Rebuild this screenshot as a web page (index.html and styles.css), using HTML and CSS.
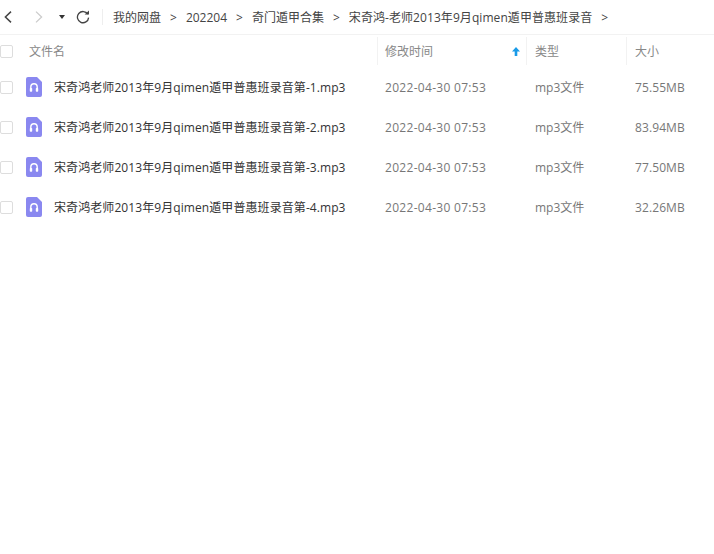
FILE: index.html
```html
<!DOCTYPE html>
<html lang="zh-CN">
<head>
  <meta charset="UTF-8">
  <meta name="viewport" content="width=device-width, initial-scale=1.0">
  <title>我的网盘</title>
  <link rel="stylesheet" href="styles.css">
</head>
<body>
  <div class="toolbar">
    <div class="nav">
      <svg class="nav-back" width="8" height="12" viewBox="0 0 8 12"><path d="M7 0.6 L1.4 6 L7 11.4" fill="none" stroke="#444" stroke-width="1.5"/></svg>
      <svg class="nav-next" width="8" height="12" viewBox="0 0 8 12"><path d="M1 0.6 L6.6 6 L1 11.4" fill="none" stroke="#ccc" stroke-width="1.3"/></svg>
      <svg class="nav-drop" width="6" height="4" viewBox="0 0 6 4"><path d="M0 0 H6 L3 4 Z" fill="#333"/></svg>
      <svg class="nav-refresh" width="14" height="14" viewBox="0 0 14 14"><path d="M11.8 4.2 A5.6 5.6 0 1 0 12.6 7.6" fill="none" stroke="#444" stroke-width="1.3"/><path d="M8.6 4.6 H13 V0.6 Z" fill="#444"/></svg>
    </div>
    <div class="crumbs">
      <span>我的网盘</span><i>&gt;</i>
      <span>202204</span><i>&gt;</i>
      <span>奇门遁甲合集</span><i>&gt;</i>
      <span class="crumb-last">宋奇鸿-老师2013年9月qimen遁甲普惠班录音</span><i>&gt;</i>
    </div>
  </div>

  <div class="row head">
    <div class="cell-check"><span class="check"></span></div>
    <div class="col-name">文件名</div>
    <div class="col-time">修改时间
      <svg class="sort" width="8" height="9" viewBox="0 0 8 9"><path d="M4 0 L8 4.5 H5.3 V9 H2.7 V4.5 H0 Z" fill="#1a9be8"/></svg>
    </div>
    <div class="col-type">类型</div>
    <div class="col-size">大小</div>
  </div>

  <div class="row file">
    <div class="cell-check"><span class="check"></span></div>
    <div class="col-name">
      <svg class="file-icon" width="16" height="20" viewBox="0 0 16 20"><path d="M2 0 H11 L16 5 V18 A2 2 0 0 1 14 20 H2 A2 2 0 0 1 0 18 V2 A2 2 0 0 1 2 0 Z" fill="#8a88f0"/><path d="M4.8 13 V10 A3.2 3.2 0 0 1 11.2 10 V13" fill="none" stroke="#fff" stroke-width="1.4"/><rect x="3.8" y="11" width="2.4" height="3.8" rx=".7" fill="#fff"/><rect x="9.8" y="11" width="2.4" height="3.8" rx=".7" fill="#fff"/></svg>
      <span class="file-name">宋奇鸿老师2013年9月qimen遁甲普惠班录音第-1.mp3</span>
    </div>
    <div class="col-time">2022-04-30 07:53</div>
    <div class="col-type">mp3文件</div>
    <div class="col-size">75.55MB</div>
  </div>
  <div class="row file">
    <div class="cell-check"><span class="check"></span></div>
    <div class="col-name">
      <svg class="file-icon" width="16" height="20" viewBox="0 0 16 20"><path d="M2 0 H11 L16 5 V18 A2 2 0 0 1 14 20 H2 A2 2 0 0 1 0 18 V2 A2 2 0 0 1 2 0 Z" fill="#8a88f0"/><path d="M4.8 13 V10 A3.2 3.2 0 0 1 11.2 10 V13" fill="none" stroke="#fff" stroke-width="1.4"/><rect x="3.8" y="11" width="2.4" height="3.8" rx=".7" fill="#fff"/><rect x="9.8" y="11" width="2.4" height="3.8" rx=".7" fill="#fff"/></svg>
      <span class="file-name">宋奇鸿老师2013年9月qimen遁甲普惠班录音第-2.mp3</span>
    </div>
    <div class="col-time">2022-04-30 07:53</div>
    <div class="col-type">mp3文件</div>
    <div class="col-size">83.94MB</div>
  </div>
  <div class="row file">
    <div class="cell-check"><span class="check"></span></div>
    <div class="col-name">
      <svg class="file-icon" width="16" height="20" viewBox="0 0 16 20"><path d="M2 0 H11 L16 5 V18 A2 2 0 0 1 14 20 H2 A2 2 0 0 1 0 18 V2 A2 2 0 0 1 2 0 Z" fill="#8a88f0"/><path d="M4.8 13 V10 A3.2 3.2 0 0 1 11.2 10 V13" fill="none" stroke="#fff" stroke-width="1.4"/><rect x="3.8" y="11" width="2.4" height="3.8" rx=".7" fill="#fff"/><rect x="9.8" y="11" width="2.4" height="3.8" rx=".7" fill="#fff"/></svg>
      <span class="file-name">宋奇鸿老师2013年9月qimen遁甲普惠班录音第-3.mp3</span>
    </div>
    <div class="col-time">2022-04-30 07:53</div>
    <div class="col-type">mp3文件</div>
    <div class="col-size">77.50MB</div>
  </div>
  <div class="row file">
    <div class="cell-check"><span class="check"></span></div>
    <div class="col-name">
      <svg class="file-icon" width="16" height="20" viewBox="0 0 16 20"><path d="M2 0 H11 L16 5 V18 A2 2 0 0 1 14 20 H2 A2 2 0 0 1 0 18 V2 A2 2 0 0 1 2 0 Z" fill="#8a88f0"/><path d="M4.8 13 V10 A3.2 3.2 0 0 1 11.2 10 V13" fill="none" stroke="#fff" stroke-width="1.4"/><rect x="3.8" y="11" width="2.4" height="3.8" rx=".7" fill="#fff"/><rect x="9.8" y="11" width="2.4" height="3.8" rx=".7" fill="#fff"/></svg>
      <span class="file-name">宋奇鸿老师2013年9月qimen遁甲普惠班录音第-4.mp3</span>
    </div>
    <div class="col-time">2022-04-30 07:53</div>
    <div class="col-type">mp3文件</div>
    <div class="col-size">32.26MB</div>
  </div>
</body>
</html>
```

FILE: styles.css
```css
body {
  margin: 0;
  background: #fff;
  color: #444;
  font-family: "Open Sans", "Noto Sans CJK SC", sans-serif;
  font-size: 12px;
  overflow: hidden;
}
.toolbar {
  display: flex;
  align-items: center;
  height: 34px;
  border-bottom: 1px solid #f2f2f2;
}
.nav {
  display: flex;
  align-items: center;
  width: 102px;
  height: 16px;
  border-right: 1px solid #eee;
}
.nav-back {
  margin-left: 4px;
}
.nav-next {
  margin-left: 23px;
}
.nav-drop {
  margin-left: 16px;
}
.nav-refresh {
  margin-left: 11px;
}
.crumbs {
  display: flex;
  align-items: center;
  margin-left: 10px;
  color: #444;
}
.crumbs i {
  font-style: normal;
  margin: 0 9px;
}
.crumb-last {
  letter-spacing: 0.07px;
}
.row {
  display: flex;
  align-items: center;
}
.head {
  height: 32px;
  color: #888;
}
.file {
  height: 40px;
}
.cell-check {
  width: 27px;
  flex: none;
}
.check {
  display: block;
  width: 11px;
  height: 11px;
  border: 1px solid #ddd;
  border-radius: 2px;
}
.col-name {
  display: flex;
  align-items: center;
  width: 350px;
  flex: none;
  box-sizing: border-box;
  padding-left: 2px;
  height: 100%;
}
.file .col-name {
  padding-left: 0;
  margin-left: -1px;
  width: 351px;
}
.file-icon {
  flex: none;
}
.file-name {
  margin-left: 12px;
  color: #333;
  white-space: nowrap;
  letter-spacing: 0.08px;
}
.col-time {
  position: relative;
  width: 150px;
  flex: none;
  box-sizing: border-box;
  padding-left: 8px;
  color: #777;
  letter-spacing: 0.3px;
}
.col-type {
  width: 100px;
  flex: none;
  box-sizing: border-box;
  padding-left: 8px;
  color: #777;
}
.col-size {
  flex: 1;
  padding-left: 8px;
  color: #777;
  letter-spacing: 0.1px;
}
.head .col-time, .head .col-type, .head .col-size {
  height: 28px;
  display: flex;
  align-items: center;
  border-left: 1px solid #f2f2f2;
  color: #888;
  letter-spacing: 0;
}
.head .col-time {
  width: 149px;
  padding-left: 7px;
}
.sort {
  position: absolute;
  right: 6px;
  top: 10px;
}
```
